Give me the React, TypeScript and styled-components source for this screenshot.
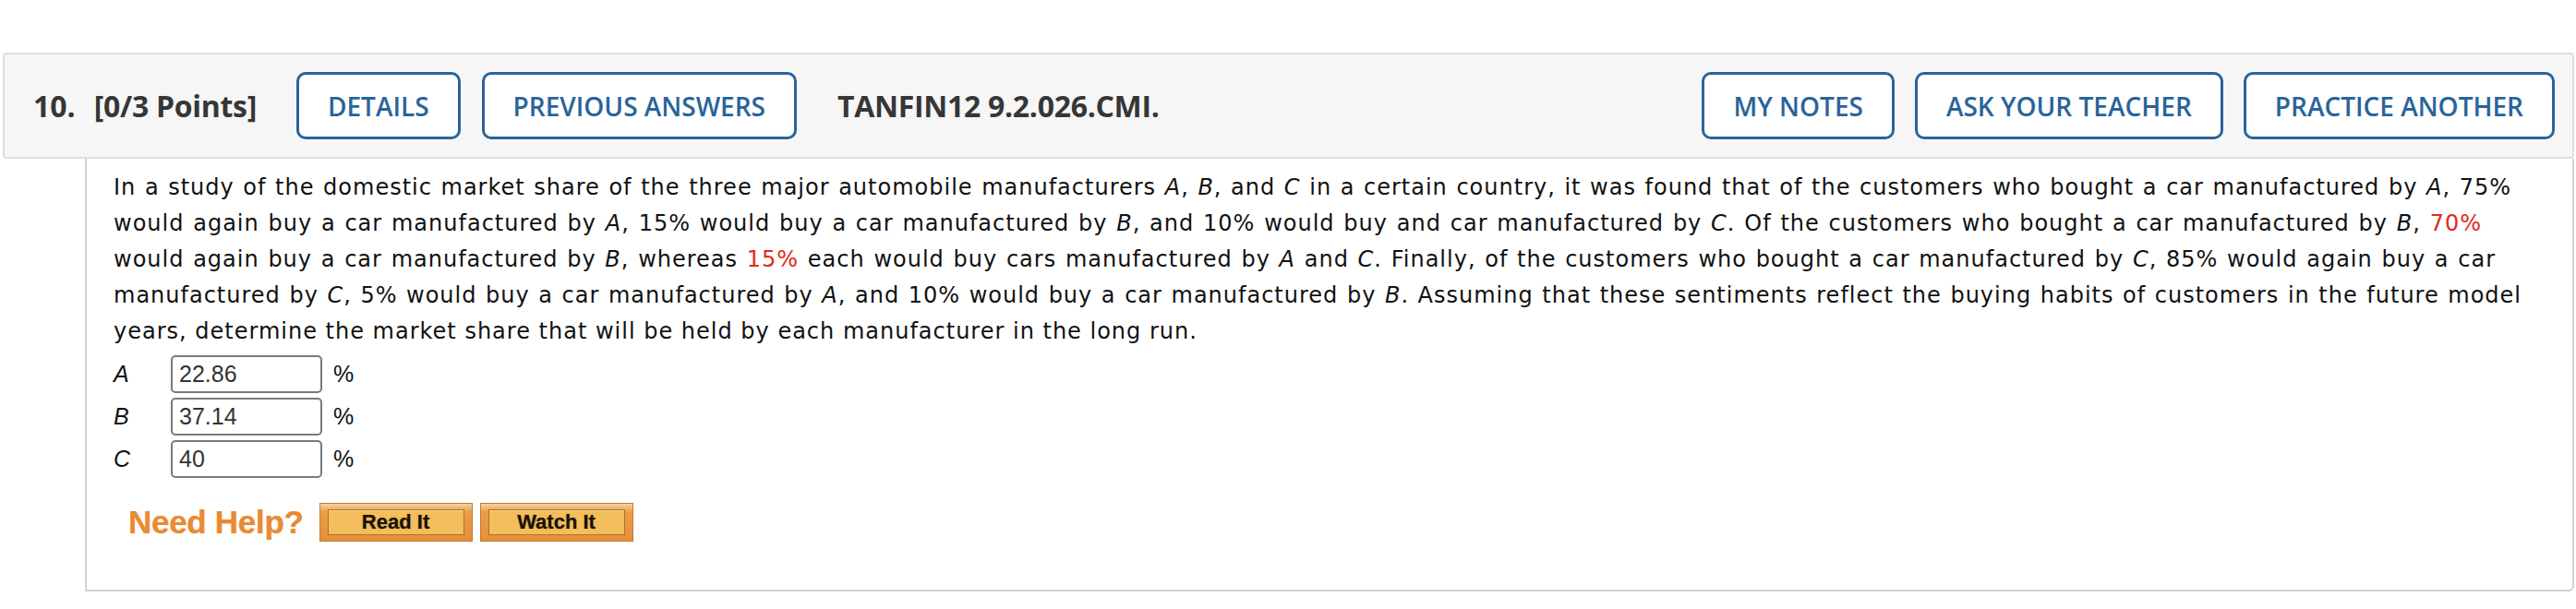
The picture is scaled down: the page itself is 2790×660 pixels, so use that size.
import React from "react";
import styled, { createGlobalStyle } from "styled-components";

const Global = createGlobalStyle`
  html, body { margin: 0; padding: 0; background: #ffffff; }
  body { width: 2790px; height: 660px; overflow: hidden; }
`;

const Page = styled.div`
  padding: 57px 2px 0 3px;
`;

const Header = styled.header`
  display: flex;
  align-items: center;
  height: 115px;
  box-sizing: border-box;
  padding: 0 19px 0 31px;
  background: #f6f6f6;
  border: 2px solid #dedede;
  border-radius: 4px;
  font-family: "Open Sans", sans-serif;
  color: #363636;
`;

const Num = styled.span`
  font-size: 32px;
  font-weight: 700;
  margin-right: 20px;
`;

const Points = styled.span`
  font-size: 32px;
  font-weight: 700;
  letter-spacing: -0.3px;
  margin-right: 43px;
`;

const Code = styled.span`
  font-size: 32px;
  font-weight: 700;
  margin-left: 44px;
  letter-spacing: -0.3px;
`;

const Spacer = styled.div`
  flex: 1;
`;

const HeadButton = styled.button<{ $gap?: number }>`
  height: 73px;
  box-sizing: border-box;
  padding: 0 31px;
  margin-left: ${(p) => p.$gap ?? 0}px;
  border: 3px solid #29649a;
  border-radius: 10px;
  background: #ffffff;
  color: #29649a;
  font-family: "Open Sans", sans-serif;
  font-size: 28px;
  font-weight: 600;
  white-space: nowrap;
`;

const Body = styled.div`
  margin-left: 89px;
  height: 469px;
  box-sizing: border-box;
  border: 2px solid #d2d2d2;
  border-top: none;
  border-radius: 0 0 6px 0;
  padding: 12px 0 0 29px;
`;

const Text = styled.div`
  font-family: "DejaVu Sans", Verdana, sans-serif;
  font-size: 24px;
  line-height: 39px;
  letter-spacing: 1px;
  color: #111;
  i { font-style: italic; }
`;

const Line = styled.div<{ $width?: number }>`
  width: ${(p) => (p.$width ? `${p.$width}px` : "auto")};
  text-align: ${(p) => (p.$width ? "justify" : "left")};
  text-align-last: ${(p) => (p.$width ? "justify" : "auto")};
`;

const Red = styled.span`
  color: #e5281c;
`;

const Answers = styled.div`
  margin-top: 6px;
  display: flex;
  flex-direction: column;
  gap: 5px;
`;

const AnswerRow = styled.div`
  display: flex;
  align-items: center;
  height: 41px;
  font-family: "Liberation Sans", Arial, sans-serif;
  font-size: 25px;
  color: #111;
`;

const Label = styled.i`
  width: 62px;
  font-style: italic;
`;

const Field = styled.div`
  width: 164px;
  height: 41px;
  box-sizing: border-box;
  border: 2px solid #7a7a7a;
  border-radius: 5px;
  padding: 0 7px;
  display: flex;
  align-items: center;
  color: #333;
  font-size: 25px;
  background: #fff;
`;

const Pct = styled.span`
  margin-left: 12px;
`;

const Help = styled.div`
  margin-top: 27px;
  display: flex;
  align-items: center;
  padding-left: 16px;
  gap: 8px;
`;

const NeedHelp = styled.span`
  font-family: "Liberation Sans", Arial, sans-serif;
  font-size: 35px;
  font-weight: 700;
  color: #ea8a32;
  letter-spacing: -0.3px;
  text-shadow: 0 0 1px rgba(234, 138, 50, 0.6);
  margin-right: 9px;
`;

const HelpButton = styled.div`
  width: 166px;
  height: 42px;
  box-sizing: border-box;
  padding: 6px 8px;
  background: linear-gradient(#f7d3a0 0%, #ec9c46 22%, #e68f3a 100%);
  border: 1px solid #c07a33;
  display: flex;
`;

const HelpInner = styled.span`
  flex: 1;
  display: flex;
  align-items: center;
  justify-content: center;
  background: #f3be5b;
  border: 1px solid #a8742f;
  box-shadow: inset 0 1px 0 #f9d58e;
  font-family: "Liberation Sans", Arial, sans-serif;
  font-size: 22px;
  font-weight: 700;
  color: #1c1204;
  text-shadow: 0 0 1px rgba(28, 18, 4, 0.5);
`;

const buttons = ["MY NOTES", "ASK YOUR TEACHER", "PRACTICE ANOTHER"];

export default function App() {
  return (
    <>
      <Global />
      <Page>
        <Header>
          <Num>10.</Num>
          <Points>[0/3 Points]</Points>
          <HeadButton>DETAILS</HeadButton>
          <HeadButton $gap={23}>PREVIOUS ANSWERS</HeadButton>
          <Code>TANFIN12 9.2.026.CMI.</Code>
          <Spacer />
          {buttons.map((b, i) => (
            <HeadButton key={b} $gap={i === 0 ? 0 : 22}>
              {b}
            </HeadButton>
          ))}
        </Header>
        <Body>
          <Text>
            <Line $width={2597}>
              In a study of the domestic market share of the three major automobile manufacturers <i>A</i>, <i>B</i>, and <i>C</i> in a certain country, it was found that of the customers who bought a car manufactured by <i>A</i>, 75%
            </Line>
            <Line $width={2565}>
              would again buy a car manufactured by <i>A</i>, 15% would buy a car manufactured by <i>B</i>, and 10% would buy and car manufactured by <i>C</i>. Of the customers who bought a car manufactured by <i>B</i>, <Red>70%</Red>
            </Line>
            <Line $width={2580}>
              would again buy a car manufactured by <i>B</i>, whereas <Red>15%</Red> each would buy cars manufactured by <i>A</i> and <i>C</i>. Finally, of the customers who bought a car manufactured by <i>C</i>, 85% would again buy a car
            </Line>
            <Line $width={2608}>
              manufactured by <i>C</i>, 5% would buy a car manufactured by <i>A</i>, and 10% would buy a car manufactured by <i>B</i>. Assuming that these sentiments reflect the buying habits of customers in the future model
            </Line>
            <Line>
              years, determine the market share that will be held by each manufacturer in the long run.
            </Line>
          </Text>
          <Answers>
            {[
              ["A", "22.86"],
              ["B", "37.14"],
              ["C", "40"],
            ].map(([l, v]) => (
              <AnswerRow key={l}>
                <Label>{l}</Label>
                <Field>{v}</Field>
                <Pct>%</Pct>
              </AnswerRow>
            ))}
          </Answers>
          <Help>
            <NeedHelp>Need Help?</NeedHelp>
            <HelpButton>
              <HelpInner>Read It</HelpInner>
            </HelpButton>
            <HelpButton>
              <HelpInner>Watch It</HelpInner>
            </HelpButton>
          </Help>
        </Body>
      </Page>
    </>
  );
}
